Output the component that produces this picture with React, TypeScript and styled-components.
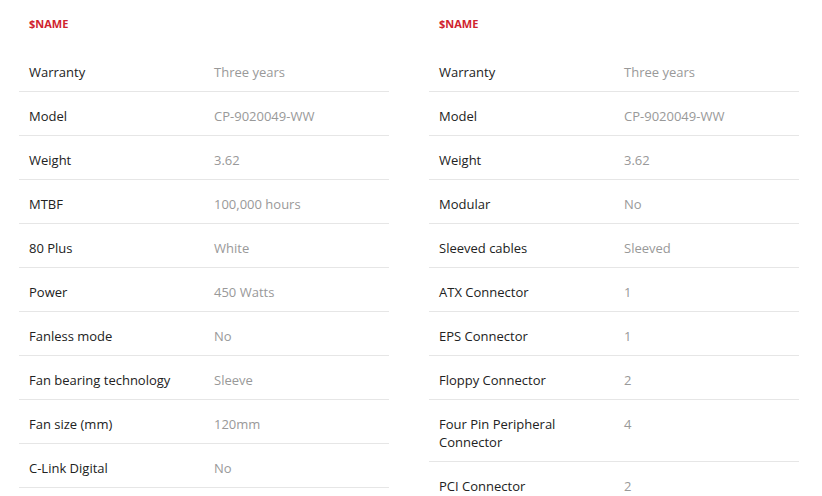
import React from "react";
import styled, { createGlobalStyle } from "styled-components";

const GlobalStyle = createGlobalStyle`
  html, body {
    margin: 0;
    padding: 0;
    background: #ffffff;
  }
  body {
    font-family: "Open Sans", "Liberation Sans", Arial, sans-serif;
  }
`;

type Spec = [string, string];

const left: Spec[] = [
  ["Warranty", "Three years"],
  ["Model", "CP-9020049-WW"],
  ["Weight", "3.62"],
  ["MTBF", "100,000 hours"],
  ["80 Plus", "White"],
  ["Power", "450 Watts"],
  ["Fanless mode", "No"],
  ["Fan bearing technology", "Sleeve"],
  ["Fan size (mm)", "120mm"],
  ["C-Link Digital", "No"],
];

const right: Spec[] = [
  ["Warranty", "Three years"],
  ["Model", "CP-9020049-WW"],
  ["Weight", "3.62"],
  ["Modular", "No"],
  ["Sleeved cables", "Sleeved"],
  ["ATX Connector", "1"],
  ["EPS Connector", "1"],
  ["Floppy Connector", "2"],
  ["Four Pin Peripheral Connector", "4"],
  ["PCI Connector", "2"],
];

// two spec tables side by side
const Page = styled.div`
  display: grid;
  grid-template-columns: 370px 370px;
  column-gap: 40px;
  padding: 0 19px;
`;

const Section = styled.section`
  display: flex;
  flex-direction: column;
`;

const Title = styled.h3`
  margin: 0;
  padding: 17px 10px 17px;
  height: 14px;
  font-size: 11px;
  line-height: 14px;
  font-weight: 700;
  color: #d0232e;
`;

const Row = styled.div`
  display: grid;
  grid-template-columns: 1fr 1fr;
  border-bottom: 1px solid #e6e6e6;
  font-size: 13px;
  line-height: 18px;
`;

const Cell = styled.div<{ $muted?: boolean }>`
  padding: 15px 10px 10px;
  color: ${(p) => (p.$muted ? "#999999" : "#222222")};
`;

const SpecTable = ({ items }: { items: Spec[] }) => (
  <Section>
    <Title>$NAME</Title>
    {items.map(([k, v]) => (
      <Row key={k}>
        <Cell>{k}</Cell>
        <Cell $muted>{v}</Cell>
      </Row>
    ))}
  </Section>
);

const App = () => (
  <>
    <GlobalStyle />
    <Page>
      <SpecTable items={left} />
      <SpecTable items={right} />
    </Page>
  </>
);

export default App;
